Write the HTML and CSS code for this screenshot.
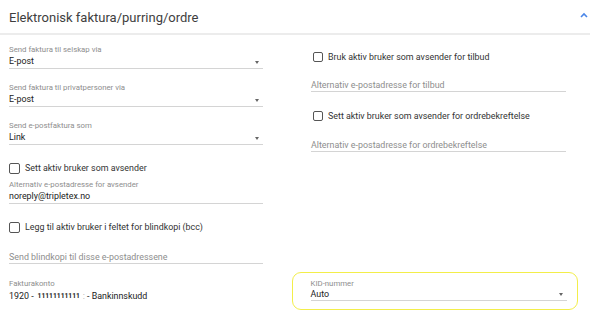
FILE: index.html
```html
<!DOCTYPE html>
<html>

<head>
	<meta charset="UTF-8">
	<title>Elektronisk faktura/purring/ordre</title>
	<link rel="stylesheet" href="styles.css">
</head>

<body>
	<div class="panel">
		<div class="panel-head">
			<h2 class="panel-title">Elektronisk faktura/purring/ordre</h2>
			<svg class="chevron" width="8" height="6" viewBox="0 0 8 6">
				<polyline points="1,5 4,2 7,5" fill="none" stroke="#4a86e8" stroke-width="1.6" />
			</svg>
		</div>
		<div class="panel-body">
			<div class="col col-left">
				<div class="field">
					<label class="field-label">Send faktura til selskap via</label>
					<div class="field-value select">E-post<span class="caret"></span></div>
				</div>
				<div class="field gap-14">
					<label class="field-label">Send faktura til privatpersoner via</label>
					<div class="field-value select">E-post<span class="caret"></span></div>
				</div>
				<div class="field gap-14">
					<label class="field-label">Send e-postfaktura som</label>
					<div class="field-value select">Link<span class="caret"></span></div>
				</div>
				<label class="check gap-16">
					<span class="box"></span> Sett aktiv bruker som avsender
				</label>
				<div class="field gap-5">
					<label class="field-label">Alternativ e-postadresse for avsender</label>
					<div class="field-value">noreply@tripletex.no</div>
				</div>
				<label class="check gap-16">
					<span class="box"></span> Legg til aktiv bruker i feltet for blindkopi (bcc)
				</label>
				<div class="field placeholder gap-16">
					<div class="field-value">Send blindkopi til disse e-postadressene</div>
				</div>
			</div>
			<div class="col col-right">
				<label class="check gap-5">
					<span class="box"></span> Bruk aktiv bruker som avsender for tilbud
				</label>
				<div class="field placeholder gap-14">
					<div class="field-value">Alternativ e-postadresse for tilbud</div>
				</div>
				<label class="check gap-17">
					<span class="box"></span> Sett aktiv bruker som avsender for ordrebekreftelse
				</label>
				<div class="field placeholder gap-15">
					<div class="field-value">Alternativ e-postadresse for ordrebekreftelse</div>
				</div>
			</div>
			<div class="field account">
				<label class="field-label">Fakturakonto</label>
				<div class="field-value">1920 -<span class="acc-no">11111111111</span><span class="acc-sep">:</span>- Bankinnskudd</div>
			</div>
			<div class="kid-highlight">
				<div class="field">
					<label class="field-label">KID-nummer</label>
					<div class="field-value select">Auto<span class="caret"></span></div>
				</div>
			</div>
		</div>
	</div>
</body>

</html>
```

FILE: styles.css
```css
body,
html {
	margin: 0;
	padding: 0;
	background: #FFFFFF;
	font-family: 'Roboto', 'Liberation Sans', sans-serif;
	color: #222222;
	overflow: hidden;
}

* {
	box-sizing: border-box;
}

.panel-head {
	height: 35px;
	display: flex;
	align-items: center;
	justify-content: space-between;
	padding: 1px 2px 0 9px;
	border-bottom: 2px solid #ececec;
}

.panel-title {
	margin: 0;
	font-size: 13px;
	font-weight: 400;
	color: #3e3e3e;
}

.chevron {
	display: block;
	margin-bottom: 5px;
}

.panel-body {
	display: grid;
	grid-template-columns: 254px 255px;
	column-gap: 48px;
	row-gap: 15px;
	padding: 10px 0 0 9px;
}

.col {
	display: flex;
	flex-direction: column;
}

.field {
	display: flex;
	flex-direction: column;
}

.field-label {
	height: 10px;
	line-height: 10px;
	font-size: 7.8px;
	color: #8e8e8e;
	white-space: nowrap;
}

.field-value {
	height: 14px;
	line-height: 13px;
	font-size: 8.9px;
	color: #222222;
	border-bottom: 1px solid #d4d4d4;
	display: flex;
	align-items: center;
	white-space: nowrap;
}

.field-value.select {
	justify-content: space-between;
	padding-right: 4px;
}

.field.placeholder .field-value {
	color: #8e8e8e;
	align-items: flex-end;
	line-height: 12px;
}

.caret {
	width: 0;
	height: 0;
	border-left: 2.5px solid transparent;
	border-right: 2.5px solid transparent;
	border-top: 3px solid #666666;
	margin-top: 1px;
}

.check {
	height: 14px;
	display: flex;
	align-items: center;
	gap: 5px;
	font-size: 8.9px;
	color: #333333;
	white-space: nowrap;
}

.check .box {
	width: 11px;
	height: 11px;
	border: 1.5px solid #555555;
	border-radius: 2px;
	flex: none;
}

.col-right .check .box {
	width: 10px;
	height: 10px;
	margin-left: 2px;
}

.gap-5 {
	margin-top: 5px;
}

.gap-14 {
	margin-top: 14px;
}

.gap-15 {
	margin-top: 15px;
}

.gap-16 {
	margin-top: 16px;
}

.gap-17 {
	margin-top: 17px;
}

.account .field-value {
	border-bottom: 0 none;
}

.account .acc-no {
	font-size: 6.7px;
	font-weight: 700;
	margin: 0 3px 0 4px;
}

.account .acc-sep {
	color: #a8a8a8;
	margin-right: 2px;
}

.kid-highlight {
	align-self: start;
	margin: -7px -12px 0 -19px;
	padding: 5.5px 10.5px 8.5px 17.5px;
	border: 1.5px solid #f3ee4a;
	border-radius: 9px;
}

.kid-highlight .field-value {
	height: 12px;
	line-height: 11px;
}
```
